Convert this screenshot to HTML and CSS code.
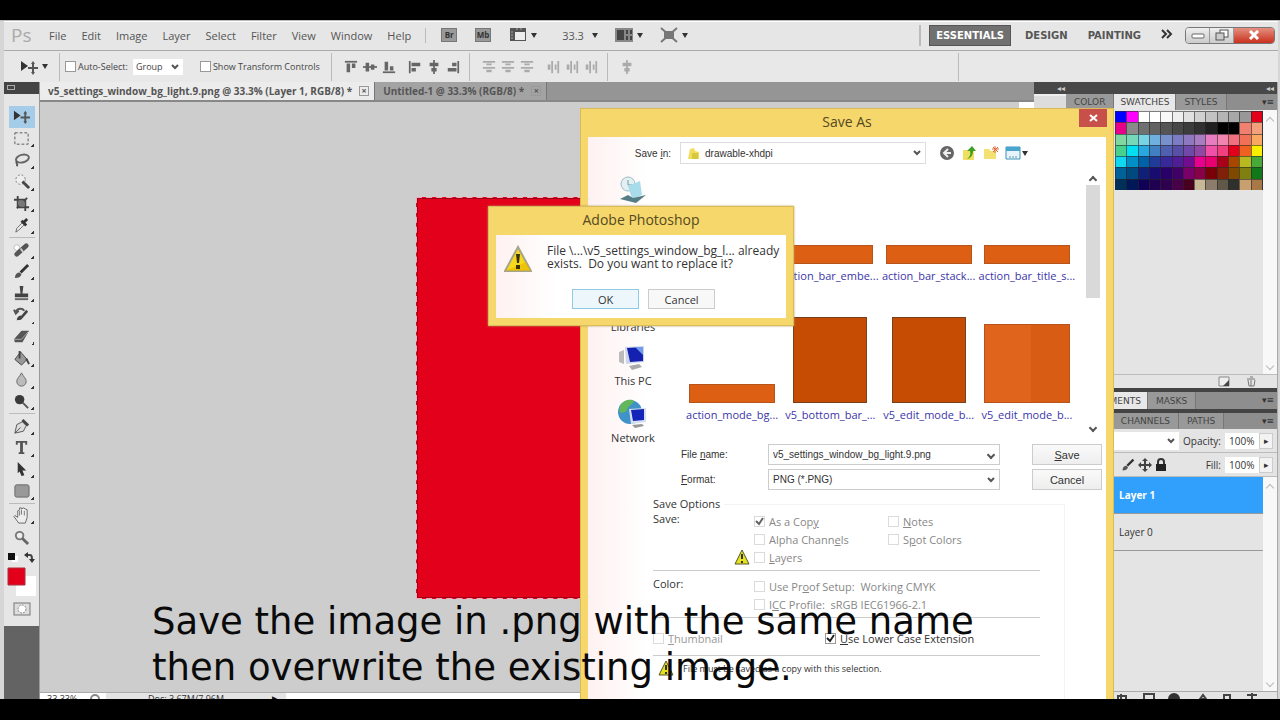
FILE: index.html
```html
<!DOCTYPE html>
<html lang="en">
<head>
    <meta charset="UTF-8">
    <meta name="viewport" content="width=device-width, initial-scale=1.0">
    <title>Save As</title>
    <link rel="stylesheet" href="styles.css">
</head>
<body>
    <svg class="symbols" aria-hidden="true">
        <symbol id="move" viewBox="0 0 18 18"><path d="M1 3l7 5-7 5z" fill="#333"/><path d="M13 5v10M8 10h10" stroke="#555" stroke-width="2"/><path d="M13 3l2 3h-4zM13 17l2-3h-4z" fill="#555"/></symbol>
        <symbol id="marquee" viewBox="0 0 18 18"><rect x="2" y="3" width="14" height="12" fill="none" stroke="#555" stroke-dasharray="3 2"/></symbol>
        <symbol id="lasso" viewBox="0 0 18 18"><ellipse cx="10" cy="7" rx="7" ry="4" fill="none" stroke="#666" stroke-width="2" transform="rotate(-15 10 7)"/><path d="M4 10c-2 2 2 2 0 5" fill="none" stroke="#555" stroke-width="2"/></symbol>
        <symbol id="quick" viewBox="0 0 18 18"><circle cx="8" cy="7" r="5" fill="#eee" stroke="#777" stroke-dasharray="2 2"/><path d="M10 9l7 7" stroke="#444" stroke-width="3"/></symbol>
        <symbol id="crop" viewBox="0 0 18 18"><path d="M5 1v12h12M1 5h12v12M4 14L15 3" fill="none" stroke="#444" stroke-width="2"/><path d="M6 6h6v6H6z" fill="#777"/></symbol>
        <symbol id="dropper" viewBox="0 0 18 18"><path d="M3 16l1-4 6-6 2 2-6 6z" fill="#eee" stroke="#666"/><path d="M9 4l5 5M11 6l4-4" stroke="#333" stroke-width="3"/></symbol>
        <symbol id="heal" viewBox="0 0 18 18"><circle cx="4" cy="7" r="3" fill="#fff" stroke="#bbb"/><path d="M4 14L14 5" stroke="#555" stroke-width="5" stroke-linecap="round"/><path d="M8 8l3 4" stroke="#ccc" stroke-width="2"/></symbol>
        <symbol id="brush" viewBox="0 0 18 18"><path d="M8 10l8-8" stroke="#333" stroke-width="3"/><path d="M2 16c0-4 2-6 5-6l2 2c-1 3-3 4-7 4z" fill="#555"/></symbol>
        <symbol id="stamp" viewBox="0 0 18 18"><path d="M7 1h4l-1 8h6v4H2V9h6z" fill="#444"/><path d="M2 15h14" stroke="#666" stroke-width="2"/></symbol>
        <symbol id="history" viewBox="0 0 18 18"><path d="M3 6c2-4 7-4 9-1M1 4l2 4 3-3" fill="none" stroke="#555" stroke-width="2"/><path d="M4 15c0-3 2-5 5-5l5-6 2 2-6 7c-1 2-3 2-6 2z" fill="#444"/></symbol>
        <symbol id="eraser" viewBox="0 0 18 18"><path d="M1 12l8-9h8l-7 12H2z" fill="#555"/><path d="M1 12h8l7-8" stroke="#aaa" fill="none"/></symbol>
        <symbol id="bucket" viewBox="0 0 18 18"><path d="M8 2l7 8-6 6-7-6z" fill="#999" stroke="#444"/><path d="M7 1v8M14 9l3 6" stroke="#444" stroke-width="2"/></symbol>
        <symbol id="drop" viewBox="0 0 18 18"><path d="M9 2c2 4 5 6 5 9a5 5 0 0 1-10 0c0-3 3-5 5-9z" fill="#bbb" stroke="#666"/></symbol>
        <symbol id="dodge" viewBox="0 0 18 18"><circle cx="7" cy="7" r="5" fill="#3a3a3a"/><path d="M10 10l6 6" stroke="#555" stroke-width="2"/></symbol>
        <symbol id="pen" viewBox="0 0 18 18"><path d="M2 16l2-9 6-3 4 4-3 6z" fill="#ddd" stroke="#555"/><path d="M10 2l6 6" stroke="#444" stroke-width="3"/><path d="M2 16l6-6" stroke="#555"/></symbol>
        <symbol id="type" viewBox="0 0 18 18"><path d="M9 3v12" stroke="#555" stroke-width="3"/><path d="M3 3h12M4 2v4M14 2v4M6 15h6" stroke="#555" stroke-width="2"/></symbol>
        <symbol id="select" viewBox="0 0 18 18"><path d="M5 1l9 9H10l2 5-3 1-2-5-2 2z" fill="#333"/></symbol>
        <symbol id="shape" viewBox="0 0 18 18"><rect x="2" y="3" width="15" height="13" rx="2" fill="#999" stroke="#666"/></symbol>
        <symbol id="hand" viewBox="0 0 18 18"><path d="M6 17l-5-7 1-1 3 2V4l2-1V1h2v1l2-1 2 1 2 1v8l-2 6z" fill="#eee" stroke="#666"/><path d="M7 4v5M9 3v5M12 4v5" stroke="#777"/></symbol>
        <symbol id="zoom" viewBox="0 0 18 18"><circle cx="7" cy="7" r="4" fill="#eee" stroke="#777" stroke-width="2"/><path d="M10 10l6 6" stroke="#666" stroke-width="3"/></symbol>
        <symbol id="warning" viewBox="0 0 28 28"><path d="M14 2L1 26h26z" fill="#f7d81c" stroke="#a5a58c" stroke-width="2"/><path d="M1 26h26l-5-9z" fill="#e8b800" opacity=".6"/><path d="M12 9h4l-1 9h-2zM12 20h4v4h-4z" fill="#3a3000"/></symbol>
        <symbol id="warningSmall" viewBox="0 0 16 16"><path d="M8 1l7 14H1z" fill="#e6e21c" stroke="#55552a"/><path d="M8 5v5M8 12v2" stroke="#333" stroke-width="2"/></symbol>
        <symbol id="alignTop" viewBox="0 0 16 16"><path d="M1 2h14" stroke="currentColor" stroke-width="2"/><path d="M3 4h4v10H3zM9 4h4v5H9z" fill="currentColor"/></symbol>
        <symbol id="alignMid" viewBox="0 0 16 16"><path d="M0 8h16" stroke="currentColor" stroke-width="2"/><path d="M3 3h4v10H3zM9 5h4v6H9z" fill="currentColor"/></symbol>
        <symbol id="alignBottom" viewBox="0 0 16 16"><path d="M1 14h14" stroke="currentColor" stroke-width="2"/><path d="M3 2h4v10H3zM9 7h4v5H9z" fill="currentColor"/></symbol>
        <symbol id="spread" viewBox="0 0 16 16"><path d="M1 2h14M1 9h14" stroke="currentColor" stroke-width="2"/><path d="M5 4h6v2H5zM5 11h6v3H5z" fill="currentColor"/></symbol>
    </svg>

    <div class="app">
        <header class="menubar">
            <span class="logo">Ps</span>
            <nav class="menus">
                <a href="#">File</a>
                <a href="#">Edit</a>
                <a href="#">Image</a>
                <a href="#">Layer</a>
                <a href="#">Select</a>
                <a href="#">Filter</a>
                <a href="#">View</a>
                <a href="#">Window</a>
                <a href="#">Help</a>
            </nav>
            <div class="app-tools">
                <button class="box-button" type="button">Br</button>
                <button class="box-button" type="button">Mb</button>
                <button class="drop-button" type="button" aria-label="View extras">
                    <svg width="18" height="16" viewBox="0 0 18 16"><path d="M1 1h16v13H1z" fill="#555"/><path d="M6 5h10v8H6z" fill="#eee"/><path d="M2 5h2M2 8h2M2 11h2M7 2h2M11 2h2" stroke="#aaa"/></svg>
                    <i class="caret"></i>
                </button>
                <button class="drop-button zoom-level" type="button">33.3 <i class="caret"></i></button>
                <button class="drop-button" type="button" aria-label="Arrange documents">
                    <svg width="18" height="16" viewBox="0 0 18 16"><path d="M0 1h18v14H0z" fill="#888"/><path d="M2 3h7v10H2zM11 3h2v4h-2zM15 3h2v4h-2zM11 9h2v4h-2zM15 9h2v4h-2z" fill="#444"/></svg>
                    <i class="caret"></i>
                </button>
                <button class="drop-button" type="button" aria-label="Screen mode">
                    <svg width="18" height="16" viewBox="0 0 18 16"><path d="M1 1l16 14M17 1L1 15" stroke="#777" stroke-width="2"/><path d="M4 4h10v8H4z" fill="#777"/></svg>
                    <i class="caret"></i>
                </button>
            </div>
            <div class="workspaces">
                <button class="active" type="button">ESSENTIALS</button>
                <button type="button">DESIGN</button>
                <button type="button">PAINTING</button>
                <button class="more" type="button" aria-label="More workspaces">
                    <svg width="12" height="10" viewBox="0 0 12 10"><path d="M1 1l4 4-4 4M6 1l4 4-4 4" fill="none" stroke="#333" stroke-width="2"/></svg>
                </button>
            </div>
            <div class="window-buttons">
                <button type="button" aria-label="Minimize"><svg width="14" height="10" viewBox="0 0 14 10"><rect x="1" y="4" width="12" height="4" rx="1" fill="#fff" stroke="#666"/></svg></button>
                <button type="button" aria-label="Restore"><svg width="14" height="12" viewBox="0 0 14 12"><rect x="5" y="1" width="8" height="7" fill="#fff" stroke="#555"/><rect x="1" y="4" width="8" height="7" fill="#ccc" stroke="#555"/></svg></button>
                <button class="close" type="button" aria-label="Close"><svg width="12" height="10" viewBox="0 0 12 10"><path d="M2 1l8 8M10 1L2 9" stroke="#fff" stroke-width="3"/></svg></button>
            </div>
        </header>

        <div class="options">
            <button class="current-tool" type="button" aria-label="Move tool"><svg width="18" height="18"><use href="#move"/></svg><i class="caret"></i></button>
            <div class="option-group auto-select">
                <label><input type="checkbox"><span>Auto-Select:</span></label>
                <select aria-label="Auto-select target"><option>Group</option></select>
                <label class="transform"><input type="checkbox"><span>Show Transform Controls</span></label>
            </div>
            <div class="option-group">
                <svg width="14" height="14"><use href="#alignTop"/></svg>
                <svg width="14" height="14"><use href="#alignMid"/></svg>
                <svg width="14" height="14"><use href="#alignBottom"/></svg>
                <svg class="turned first" width="14" height="14"><use href="#alignBottom"/></svg>
                <svg class="turned" width="14" height="14"><use href="#alignMid"/></svg>
                <svg class="turned-back" width="14" height="14"><use href="#alignBottom"/></svg>
            </div>
            <div class="option-group faded">
                <svg width="14" height="14"><use href="#spread"/></svg>
                <svg width="14" height="14"><use href="#spread"/></svg>
                <svg width="14" height="14"><use href="#spread"/></svg>
                <svg class="turned first" width="14" height="14"><use href="#spread"/></svg>
                <svg class="turned" width="14" height="14"><use href="#spread"/></svg>
                <svg class="turned" width="14" height="14"><use href="#spread"/></svg>
            </div>
            <div class="option-group faded last">
                <svg class="turned" width="14" height="14"><use href="#alignMid"/></svg>
            </div>
            <div class="option-end"></div>
        </div>

        <div class="body">
            <aside class="toolbox">
                <div class="dock-head"><i></i></div>
                <div class="tool-panel">
                    <div class="tools">
                        <button class="active" type="button" aria-label="Move"><svg><use href="#move"/></svg></button>
                        <button type="button" aria-label="Marquee"><svg><use href="#marquee"/></svg></button>
                        <button type="button" aria-label="Lasso"><svg><use href="#lasso"/></svg></button>
                        <button type="button" aria-label="Quick selection"><svg><use href="#quick"/></svg></button>
                        <button type="button" aria-label="Crop"><svg><use href="#crop"/></svg></button>
                        <button type="button" aria-label="Eyedropper"><svg><use href="#dropper"/></svg></button>
                        <hr>
                        <button type="button" aria-label="Healing brush"><svg><use href="#heal"/></svg></button>
                        <button type="button" aria-label="Brush"><svg><use href="#brush"/></svg></button>
                        <button type="button" aria-label="Clone stamp"><svg><use href="#stamp"/></svg></button>
                        <button type="button" aria-label="History brush"><svg><use href="#history"/></svg></button>
                        <button type="button" aria-label="Eraser"><svg><use href="#eraser"/></svg></button>
                        <button type="button" aria-label="Paint bucket"><svg><use href="#bucket"/></svg></button>
                        <button type="button" aria-label="Blur"><svg><use href="#drop"/></svg></button>
                        <button type="button" aria-label="Dodge"><svg><use href="#dodge"/></svg></button>
                        <hr>
                        <button type="button" aria-label="Pen"><svg><use href="#pen"/></svg></button>
                        <button type="button" aria-label="Type"><svg><use href="#type"/></svg></button>
                        <button type="button" aria-label="Path selection"><svg><use href="#select"/></svg></button>
                        <button type="button" aria-label="Rectangle"><svg><use href="#shape"/></svg></button>
                        <hr>
                        <button type="button" aria-label="Hand"><svg><use href="#hand"/></svg></button>
                        <button class="single" type="button" aria-label="Zoom"><svg><use href="#zoom"/></svg></button>
                    </div>
                    <svg class="colors" width="30" height="46" viewBox="0 0 30 46">
                        <path d="M5 4h6v6H5z" fill="#fff"/><path d="M1 1h7v7H1z" fill="#111"/>
                        <path d="M18 3h5c2 0 2 2 2 6" fill="none" stroke="#444" stroke-width="2"/><path d="M21 0v6l-4-3zM22 7h6l-3 4z" fill="#333"/>
                        <path d="M9 24h20v20H9z" fill="#fff"/><path d="M1 16h17v17H1z" fill="#e2001a" stroke="#a8323f"/>
                    </svg>
                    <button class="mask-button" type="button" aria-label="Quick mask"><svg width="18" height="14" viewBox="0 0 18 14"><rect x="1" y="1" width="16" height="12" fill="#ddd" stroke="#777"/><circle cx="9" cy="7" r="4" fill="#fff" stroke="#888" stroke-dasharray="2 1"/></svg></button>
                </div>
            </aside>

            <main class="document">
                <div class="tabs">
                    <button class="active" type="button"><span>v5_settings_window_bg_light.9.png @ 33.3% (Layer 1, RGB/8) *</span><i>×</i></button>
                    <button type="button"><span>Untitled-1 @ 33.3% (RGB/8) *</span><i>×</i></button>
                </div>
                <div class="canvas">
                    <div class="artwork"></div>
                    <div class="canvas-scroll"></div>
                </div>
                <footer class="status">
                    <span>33.33%</span>
                    <span class="status-icon"></span>
                    <span class="doc-size">Doc: 3.67M/7.96M</span>
                    <span class="status-arrow">▶</span>
                </footer>
            </main>

            <aside class="dock">
                <div class="dock-top"><span>◂◂</span><span>◂◂</span></div>
                <div class="dock-columns">
                    <div class="icon-column"></div>
                    <div class="panels">
                        <section class="panel">
                            <div class="panel-tabs">
                                <button type="button">COLOR</button>
                                <button class="active" type="button">SWATCHES</button>
                                <button type="button">STYLES</button>
                                <span class="panel-menu">▾≡</span>
                            </div>
                            <div class="swatch-area">
                                <div class="swatches" id="swatches"></div>
                                <div class="scroll-track"><i class="chevron up"></i><i class="chevron"></i></div>
                            </div>
                            <div class="panel-foot">
                                <svg width="12" height="11" viewBox="0 0 12 11"><path d="M1 1h10v9H1z" fill="#eee" stroke="#888"/><path d="M5 10l6-6v6z" fill="#444"/></svg>
                                <svg width="12" height="11" viewBox="0 0 12 11"><path d="M2 3h8M5 1h3M3 4l1 6h5l1-6M6 4v6" fill="none" stroke="#777"/></svg>
                            </div>
                        </section>
                        <section class="panel">
                            <div class="panel-tabs adjustments">
                                <button class="active" type="button">ADJUSTMENTS</button>
                                <button type="button">MASKS</button>
                                <span class="panel-menu">▾≡</span>
                            </div>
                        </section>
                        <section class="panel layers">
                            <div class="panel-tabs">
                                <button class="active" type="button">LAYERS</button>
                                <button type="button">CHANNELS</button>
                                <button type="button">PATHS</button>
                                <span class="panel-menu">▾≡</span>
                            </div>
                            <div class="layer-row">
                                <select class="blend" aria-label="Blend mode"><option></option></select>
                                <label for="opacity">Opacity:</label>
                                <input id="opacity" type="text" value="100%"><button type="button" aria-label="Opacity slider">▸</button>
                            </div>
                            <div class="layer-row">
                                <span class="locks">
                                    <svg width="14" height="14"><use href="#brush"/></svg>
                                    <svg width="14" height="14" viewBox="0 0 14 14"><path d="M7 1v12M1 7h12" stroke="#444" stroke-width="2"/><path d="M7 0l3 3H4zM7 14l3-3H4zM0 7l3-3v6zM14 7l-3-3v6z" fill="#444"/></svg>
                                    <svg width="12" height="14" viewBox="0 0 12 14"><path d="M3 7V4a3 3 0 0 1 6 0v3" fill="none" stroke="#333" stroke-width="2"/><path d="M1 6h10v7H1z" fill="#222"/></svg>
                                </span>
                                <label for="fill">Fill:</label>
                                <input id="fill" type="text" value="100%"><button type="button" aria-label="Fill slider">▸</button>
                            </div>
                            <div class="layer-area">
                                <ul class="layer-list">
                                    <li class="selected">Layer 1</li>
                                    <li>Layer 0</li>
                                </ul>
                                <div class="scroll-track"><i class="chevron up"></i><i class="chevron"></i></div>
                            </div>
                            <div class="layer-foot">
                                <svg width="150" height="7" viewBox="0 0 150 7"><path d="M4 7V4h8v3M7 2v5M30 7V2h10v5" fill="none" stroke="#444" stroke-width="2"/><circle cx="60" cy="7" r="6" fill="#333"/><path d="M86 7h6l-3-4zM110 7V3h6v4M133 3h10M138 1v6" fill="none" stroke="#444" stroke-width="2"/></svg>
                            </div>
                        </section>
                    </div>
                </div>
            </aside>
        </div>

        <div class="window save-window" role="dialog" aria-labelledby="saveTitle">
            <div class="window-title">
                <h2 id="saveTitle">Save As</h2>
                <button class="window-close" type="button" aria-label="Close"><svg width="9" height="8" viewBox="0 0 9 8"><path d="M1 1l7 6M8 1L1 7" stroke="#fff" stroke-width="2"/></svg></button>
            </div>
            <form class="save-form">
                <div class="save-in">
                    <label for="folder">Save <u>i</u>n:</label>
                    <div class="folder-box">
                        <svg width="14" height="14" viewBox="0 0 14 14"><path d="M1 13l2-10 4-1 1 3 4 1v7z" fill="#f2dc5a"/><path d="M5 7h6v6H5z" fill="#d5c83c"/></svg>
                        <select id="folder"><option>drawable-xhdpi</option></select>
                    </div>
                    <div class="folder-tools">
                        <button type="button" aria-label="Back"><svg width="16" height="16" viewBox="0 0 16 16"><circle cx="8" cy="8" r="7" fill="#666"/><path d="M9 4L5 8l4 4M5 8h7" fill="none" stroke="#eee" stroke-width="2"/></svg></button>
                        <button type="button" aria-label="Up one level"><svg width="16" height="16" viewBox="0 0 16 16"><path d="M2 5h11v10H2z" fill="#f0e060"/><path d="M6 14c3-2 4-5 3-8H6l5-5 4 5h-3c0 4-2 7-6 8z" fill="#3f9e28"/></svg></button>
                        <button type="button" aria-label="New folder"><svg width="16" height="16" viewBox="0 0 16 16"><path d="M1 4h5l2 2h5v8H1z" fill="#f3e273"/><path d="M12 1v7M9 4h7M10 2l5 5M15 2l-5 5" stroke="#e06a35"/></svg></button>
                        <button class="view-button" type="button" aria-label="View menu"><svg width="16" height="16" viewBox="0 0 16 16"><path d="M1 2h14v12H1z" fill="#e7f4fb" stroke="#3b93be"/><path d="M1 2h14v4H1z" fill="#4aa5cc"/><path d="M4 12h8" stroke="#69a" stroke-dasharray="2 1"/></svg><i class="caret"></i></button>
                    </div>
                </div>

                <div class="browser">
                    <div class="places">
                        <a class="recent" href="#" aria-label="Recent places"><svg width="30" height="30" viewBox="0 0 30 30"><circle cx="10" cy="9" r="7" fill="#e3f0f3" stroke="#9bbcc4"/><path d="M10 5v5h4" fill="none" stroke="#6d9aa5"/><path d="M10 11l12-5 2 14-10 4z" fill="#a8dcec"/><path d="M2 24l8-4 5 3 13-3-10 8z" fill="#567d86"/></svg></a>
                        <a class="libraries" href="#">Libraries</a>
                        <a href="#"><svg width="32" height="28" viewBox="0 0 32 28"><path d="M2 8l5-2v14l-5-2z" fill="#bbb"/><path d="M8 3l19-1v16l-18 2z" fill="#ccd6e8"/><path d="M10 4l16-1v14l-13 1z" fill="#1420b0"/><path d="M18 3h8v8z" fill="#6f9bea"/><path d="M12 22l10-2 3 3-10 3z" fill="#aaa"/></svg>This PC</a>
                        <a href="#"><svg width="32" height="30" viewBox="0 0 32 30"><circle cx="13" cy="13" r="12" fill="#3f93c8"/><path d="M3 7c4-7 12-7 14-5-3 5-6 5-7 9-2 3-6 4-8 1z" fill="#63b65a"/><path d="M12 10l17-1v14l-15 2z" fill="#d5dff0"/><path d="M14 11l13-1v11l-11 1z" fill="#1524b8"/><path d="M15 26l10-1 2 2-9 2z" fill="#999"/></svg>Network</a>
                    </div>
                    <div class="files">
                        <figure></figure>
                        <figure><div class="thumb bar"></div><figcaption>action_bar_embe...</figcaption></figure>
                        <figure><div class="thumb bar"></div><figcaption>action_bar_stack...</figcaption></figure>
                        <figure><div class="thumb bar"></div><figcaption>action_bar_title_s...</figcaption></figure>
                        <figure><div class="thumb bar"></div><figcaption>action_mode_bg...</figcaption></figure>
                        <figure><div class="thumb tall"></div><figcaption>v5_bottom_bar_...</figcaption></figure>
                        <figure><div class="thumb tall"></div><figcaption>v5_edit_mode_b...</figcaption></figure>
                        <figure><div class="thumb wide"></div><figcaption>v5_edit_mode_b...</figcaption></figure>
                    </div>
                    <div class="file-scroll"><i class="chevron up"></i><span></span><i class="chevron"></i></div>
                </div>

                <div class="name-grid">
                    <label for="fileName">File <u>n</u>ame:</label>
                    <div class="combo"><input id="fileName" type="text" value="v5_settings_window_bg_light.9.png"><i class="chevron"></i></div>
                    <button type="button"><u>S</u>ave</button>
                    <label for="format"><u>F</u>ormat:</label>
                    <select id="format"><option>PNG (*.PNG)</option></select>
                    <button type="button">Cancel</button>
                </div>

                <fieldset class="save-options">
                    <legend>Save Options</legend>
                    <div class="option-block">
                        <span class="block-name">Save:</span>
                        <div class="checks two">
                            <label><input type="checkbox" checked disabled><span>As a Cop<u>y</u></span></label>
                            <label><input type="checkbox" disabled><span><u>N</u>otes</span></label>
                            <label><input type="checkbox" disabled><span>Alpha Chann<u>e</u>ls</span></label>
                            <label><input type="checkbox" disabled><span>S<u>p</u>ot Colors</span></label>
                            <label class="warned"><svg width="16" height="16"><use href="#warningSmall"/></svg><input type="checkbox" disabled><span><u>L</u>ayers</span></label>
                        </div>
                    </div>
                    <div class="option-block">
                        <span class="block-name">Color:</span>
                        <div class="checks">
                            <label><input type="checkbox" disabled><span>Use Pr<u>o</u>of Setup:&nbsp; Working CMYK</span></label>
                            <label><input type="checkbox" disabled><span>I<u>C</u>C Profile:&nbsp; sRGB IEC61966-2.1</span></label>
                        </div>
                    </div>
                    <div class="option-block bottom-block">
                        <label class="thumbnail"><input type="checkbox" disabled><span><u>T</u>humbnail</span></label>
                        <label class="enabled"><input type="checkbox" checked><span><u>U</u>se Lower Case Extension</span></label>
                    </div>
                    <p class="note"><svg width="16" height="16"><use href="#warningSmall"/></svg><span>File must be saved as a copy with this selection.</span></p>
                </fieldset>
            </form>
        </div>

        <div class="window alert-window" role="alertdialog" aria-labelledby="alertTitle">
            <div class="window-title"><h2 id="alertTitle">Adobe Photoshop</h2></div>
            <div class="alert-body">
                <svg width="28" height="28"><use href="#warning"/></svg>
                <p>File \...\v5_settings_window_bg_l... already<br>exists.&nbsp; Do you want to replace it?</p>
                <div class="alert-buttons">
                    <button class="default" type="button">OK</button>
                    <button type="button">Cancel</button>
                </div>
            </div>
        </div>

        <p class="caption">Save the image in .png with the same name<br>then overwrite the existing image.</p>
    </div>

    <script>
        const colors = [
            "#0000ff #ff00ff #ffffff #ffffff #f8f8f8 #eeeeee #e0e0e0 #d0d0d0 #c2c2c2 #b4b4b4 #a8a8a8 #989898 #e2001a",
            "#e6008a #8a8a8a #707070 #626262 #555555 #484848 #3c3c3c #303030 #202020 #000000 #000000 #f08070 #f4a07c",
            "#7ed8a0 #76d8b8 #78d4e4 #70b0e0 #7890cc #7c7cc4 #8e78c0 #a87cc0 #e87cc0 #f284b0 #f07080 #f07058 #f8a860",
            "#48d08c #00e0f0 #28a8e0 #4080c0 #5060b0 #5850a8 #7048a8 #9048a4 #f050a8 #f04080 #e2001a #f06020 #f8f000",
            "#10d8f0 #0090c8 #0060a8 #203c98 #38289c #501c98 #700c90 #e80090 #e80070 #a80018 #a84800 #b8b820 #48a838",
            "#006098 #004880 #102078 #180c70 #280068 #400068 #780068 #880048 #780008 #802008 #804800 #808010 #107818",
            "#003058 #001858 #100058 #200050 #300050 #480048 #480020 #c8b898 #8c7c6c #605848 #30302c #c8a070 #a87848"
        ];

        const swatches = document.getElementById("swatches");
        colors.join(" ").split(" ").forEach(color => {
            const cell = document.createElement("span");
            cell.style.background = color;
            swatches.appendChild(cell);
        });
    </script>
</body>
</html>
```
FILE: styles.css
```css
* {
    box-sizing: border-box;
}
body {
    margin: 0;
    background: #000;
    font-family: "Open Sans", "Noto Sans", sans-serif;
    font-size: 11px;
    color: #333;
}
button, input, select {
    font: inherit;
    color: inherit;
    margin: 0;
    padding: 0;
    border: none;
    background: none;
    border-radius: 0;
}
h2, p, ul, figure {
    margin: 0;
    padding: 0;
}
a {
    color: inherit;
    text-decoration: none;
}
.symbols {
    position: absolute;
    width: 0;
    height: 0;
}
.app {
    position: relative;
    display: flex;
    flex-direction: column;
    height: calc(100vh - 41px);
    margin: 20px 0 21px;
    padding: 0 2px 0 4px;
    background: #d6d6d6;
    border-top: 1px solid #bbb;
    overflow: hidden;
}
.caret {
    display: inline-block;
    border: 3px solid transparent;
    border-top: 5px solid #333;
    border-bottom: 0;
}
.chevron {
    width: 6px;
    height: 6px;
    border: solid #555;
    border-width: 0 2px 2px 0;
    transform: rotate(45deg);
}
.chevron.up {
    transform: rotate(225deg);
}
select {
    appearance: none;
    background: #fff url("data:image/svg+xml,%3Csvg xmlns='http://www.w3.org/2000/svg' width='8' height='6'%3E%3Cpath d='M1 1l3 3 3-3' fill='none' stroke='%23555' stroke-width='2'/%3E%3C/svg%3E") no-repeat right 4px center;
}
input[type="checkbox"] {
    appearance: none;
    flex: none;
    width: 11px;
    height: 11px;
    background: #fff;
    border: 1px solid #999;
}
input[type="checkbox"]:checked {
    background: url("data:image/svg+xml,%3Csvg xmlns='http://www.w3.org/2000/svg' width='9' height='9'%3E%3Cpath d='M1 4l3 3 4-6' fill='none' stroke='%23222' stroke-width='2'/%3E%3C/svg%3E") no-repeat center;
}
input[type="checkbox"]:disabled {
    border-color: #ccc;
    opacity: 0.7;
}

/* menu bar */
.menubar {
    display: flex;
    align-items: center;
    height: 30px;
    padding-bottom: 2px;
    background: #e6e6e6;
    border-top: 1px solid #fff;
    border-bottom: 1px solid #aaa;
    color: #555;
}
.logo {
    width: 45px;
    padding-left: 7px;
    font-size: 19px;
    color: #aaa;
}
.menus {
    display: flex;
    gap: 15px;
    padding-right: 14px;
    border-right: 1px solid #bbb;
}
.app-tools {
    display: flex;
    align-items: center;
    margin-left: 15px;
}
.box-button {
    width: 16px;
    height: 14px;
    margin-right: 18px;
    background: #999;
    border: 1px solid #777;
    color: #333;
    font-size: 8px;
    font-weight: bold;
    line-height: 10px;
}
.drop-button {
    display: flex;
    align-items: center;
    gap: 4px;
    margin-right: 17px;
}
.zoom-level {
    gap: 8px;
    margin: 0 17px 0 8px;
}
.workspaces {
    display: flex;
    align-items: center;
    gap: 14px;
    margin-left: auto;
    padding-left: 8px;
    border-left: 2px solid #bbb;
    font-family: "DejaVu Sans", sans-serif;
    font-size: 10px;
    font-weight: bold;
}
.workspaces button {
    height: 21px;
}
.workspaces button + button + button {
    margin-left: 6px;
}
.workspaces .active {
    padding: 0 6px;
    background: #707070;
    border: 1px solid #555;
    color: #fff;
}
.window-buttons {
    display: flex;
    height: 17px;
    margin: 0 3px 0 12px;
    border: 1px solid #777;
    border-radius: 4px;
    overflow: hidden;
}
.window-buttons button {
    display: flex;
    align-items: center;
    justify-content: center;
    width: 24px;
    background: linear-gradient(#eee, #ccc);
    border-right: 1px solid #999;
}
.window-buttons .close {
    width: 40px;
    background: linear-gradient(#e59080, #c9301c);
    border: none;
}

/* tool options */
.options {
    display: flex;
    align-items: center;
    height: 31px;
    background: #e8e8e8;
    color: #444;
}
.current-tool {
    display: flex;
    align-items: center;
    gap: 4px;
    width: 56px;
    height: 28px;
    padding-left: 16px;
    border-right: 1px solid #bbb;
}
.option-group {
    display: flex;
    align-items: center;
    gap: 5px;
    height: 28px;
    padding: 0 9px 0 12px;
    border-right: 1px solid #bbb;
}
.option-group label {
    display: flex;
    align-items: center;
    gap: 2px;
    font-size: 9px;
}
.option-group select {
    width: 50px;
    height: 16px;
    padding-left: 3px;
    font-size: 9px;
    line-height: 14px;
}
.option-group .transform {
    margin-left: 12px;
}
.auto-select {
    padding: 0 11px 0 5px;
}
.option-group svg {
    color: #666;
}
.option-group.faded svg {
    color: #aaa;
}
.option-group.last {
    border: none;
}
.turned {
    transform: rotate(90deg);
}
.turned-back {
    transform: rotate(-90deg);
}
.first {
    margin-left: 7px;
}
.option-end {
    width: 320px;
    height: 28px;
    margin-left: auto;
    border-left: 1px solid #bbb;
}

/* work area */
.body {
    display: flex;
    flex: 1;
    min-height: 0;
}
.toolbox {
    display: flex;
    flex-direction: column;
    width: 36px;
    background: #636363;
    border-right: 1px solid #999;
}
.dock-head {
    height: 12px;
    padding: 3px;
    background: #444;
}
.dock-head i {
    display: block;
    width: 8px;
    height: 5px;
    border: 1px solid #aaa;
}
.tool-panel {
    display: flex;
    flex-direction: column;
    align-items: center;
    padding: 12px 2px 10px;
    background: #e6e6e6;
}
.tools {
    display: flex;
    flex-direction: column;
    width: 26px;
    height: 442px;
}
.tools button {
    flex: 1;
    display: flex;
    align-items: center;
    justify-content: center;
    min-height: 0;
    background: linear-gradient(135deg, transparent 50%, #333 50%) no-repeat right 1px bottom 2px / 3px 3px;
}
.tools .single {
    background: none;
}
.tools svg {
    width: 17px;
    height: 17px;
}
.tools .active {
    background: #a5cdea;
}
.tools hr {
    width: 100%;
    margin: 1px 0;
    border: none;
    border-top: 1px solid #bbb;
}
.colors {
    margin-top: 4px;
}
.mask-button {
    height: 14px;
    margin-top: 4px;
}
.mask-button svg {
    display: block;
}
.document {
    display: flex;
    flex: 1;
    flex-direction: column;
    min-width: 0;
}
.tabs {
    display: flex;
    height: 20px;
    background: #959595;
    border-bottom: 2px solid #888;
    font-size: 10px;
    font-weight: bold;
}
.tabs button {
    display: flex;
    align-items: center;
    gap: 7px;
    padding: 0 5px 0 8px;
    background: #a3a3a3;
    border-right: 1px solid #777;
    color: #555;
    white-space: nowrap;
}
.tabs .active {
    background: #ececec;
    color: #555;
}
.tabs i {
    width: 10px;
    height: 10px;
    border: 1px solid #999;
    font-size: 9px;
    font-style: normal;
    line-height: 7px;
}
.canvas {
    display: flex;
    flex: 1;
    justify-content: space-between;
    min-height: 0;
    background: #cdcdcd;
}
.artwork {
    width: 420px;
    height: 402px;
    margin: 95px 0 0 376px;
    background: #e2001a;
    border: 2px dashed #f7a8b8;
    outline: 1px solid #a00018;
    outline-offset: -2px;
}
.canvas-scroll {
    width: 15px;
    background: #fff;
}
.status {
    display: flex;
    height: 7px;
    background: #fff;
    border-top: 1px solid #aaa;
    font-size: 9px;
    line-height: 12px;
    overflow: hidden;
}
.status span:first-child {
    width: 44px;
    padding-left: 7px;
}
.status-icon {
    width: 10px;
    height: 10px;
    margin: 1px 6px;
    border: 2px solid #888;
    border-radius: 50%;
}
.doc-size {
    width: 166px;
    padding-left: 42px;
    background: #e4e4e4;
}
.status-arrow {
    width: 14px;
    background: #e4e4e4;
    color: #111;
}

/* right dock */
.dock {
    display: flex;
    flex-direction: column;
    width: 244px;
    border-right: 1px solid #aaa;
}
.dock-top {
    display: flex;
    justify-content: space-between;
    height: 12px;
    padding: 0 3px 0 23px;
    background: #484848;
    color: #ccc;
    font-size: 8px;
    line-height: 12px;
}
.dock-columns {
    display: flex;
    flex: 1;
    min-height: 0;
}
.icon-column {
    width: 32px;
    background: #ddd;
    border-top: 2px solid #eee;
}
.panels {
    display: flex;
    flex: 1;
    flex-direction: column;
    min-width: 0;
}
.panel {
    background: #e4e4e4;
}
.panel-tabs {
    display: flex;
    height: 16px;
    background: #8e8e8e;
    font-family: "DejaVu Sans", sans-serif;
    font-size: 9px;
    line-height: 16px;
}
.panel-tabs button {
    padding: 0 8px;
    background: #999;
    border-right: 1px solid #777;
    color: #444;
}
.panel-tabs .active {
    padding: 0 6px;
    background: #e8e8e8;
}
.panel-menu {
    margin-left: auto;
    padding-right: 3px;
}
.swatch-area {
    display: flex;
    align-items: flex-start;
    justify-content: flex-end;
    height: 264px;
}
.swatches {
    display: grid;
    grid-template-columns: repeat(13, 1fr);
    grid-template-rows: repeat(7, 1fr);
    width: 148px;
    height: 79px;
    margin-top: 1px;
    border-right: 1px solid #333;
}
.swatches span {
    border: solid rgba(40, 40, 40, 0.6);
    border-width: 1px 0 0 1px;
}
.scroll-track {
    display: flex;
    flex: none;
    flex-direction: column;
    align-items: center;
    align-self: stretch;
    justify-content: space-between;
    width: 14px;
    padding: 8px 0 5px;
    background: #f8f8f8;
}
.scroll-track .chevron {
    border-color: #bbb;
    border-width: 0 1px 1px 0;
}
.panel-foot {
    display: flex;
    justify-content: flex-end;
    gap: 15px;
    height: 14px;
    padding: 1px 20px 0 0;
    border-top: 1px solid #bbb;
}
.panel + .panel {
    border-top: 4px solid #444;
}
.adjustments {
    height: 17px;
}
.adjustments .active {
    padding: 0 6px 0 10px;
}
.layers {
    display: flex;
    flex: 1;
    flex-direction: column;
    min-height: 0;
}
.layer-row {
    display: flex;
    align-items: center;
    justify-content: flex-end;
    height: 24px;
    padding-right: 4px;
    border-bottom: 1px solid #bbb;
    font-size: 10px;
}
.layer-row label {
    margin: 0 4px;
}
.layer-row input {
    width: 34px;
    height: 16px;
    padding: 0 4px;
    background: #fff;
}
.layer-row button {
    width: 14px;
    height: 16px;
    background: #f3f3f3;
    border: 1px solid #ccc;
    font-size: 9px;
    line-height: 12px;
}
.blend {
    flex: 1;
    height: 18px;
}
.locks {
    display: flex;
    gap: 3px;
    margin-right: auto;
    padding-left: 55px;
}
.layer-area {
    display: flex;
    flex: 1;
    min-height: 0;
}
.layer-list {
    flex: 1;
    list-style: none;
    font-size: 10px;
}
.layer-list li {
    height: 37px;
    padding-left: 53px;
    border-bottom: 1px solid #999;
    line-height: 37px;
}
.layer-list .selected {
    background: #319ffc;
    color: #fff;
    font-weight: bold;
}
.layer-foot {
    height: 8px;
    padding-left: 48px;
    border-top: 1px solid #aaa;
}
.layer-foot svg {
    display: block;
}

/* windows over the work area */
.window {
    position: absolute;
    padding: 0 7px 7px;
    background: #f5d76c;
    border: 1px solid #d9bc59;
}
.window-title {
    display: flex;
    align-items: center;
    justify-content: center;
    height: 28px;
    padding-bottom: 3px;
}
.window-title h2 {
    font-size: 14px;
    font-weight: normal;
    color: #55491f;
}
.save-window {
    top: 87px;
    left: 580px;
    width: 534px;
    bottom: -8px;
}
.window-close {
    position: absolute;
    top: 0;
    right: 6px;
    width: 28px;
    height: 18px;
    background: #c8504a;
    line-height: 8px;
}
.save-form {
    height: 100%;
    background: linear-gradient(90deg, #fff1f1, #fff 60px);
    color: #333;
}
.save-in, .name-grid {
    font-family: "Liberation Sans", Arial, sans-serif;
    font-size: 10px;
}
.save-in {
    display: flex;
    align-items: center;
    height: 34px;
    padding-bottom: 2px;
}
.save-in > label {
    width: 83px;
    text-align: right;
}
.folder-box {
    display: flex;
    align-items: center;
    gap: 4px;
    width: 246px;
    height: 22px;
    margin-left: 9px;
    padding-left: 6px;
    background: #fff;
    border: 1px solid #ddd;
}
.folder-box select {
    flex: 1;
    height: 18px;
}
.folder-tools {
    display: flex;
    gap: 6px;
    margin-left: 13px;
}
.folder-tools button {
    display: flex;
    align-items: center;
}
.view-button {
    gap: 1px;
}
.browser {
    display: flex;
    height: 268px;
}
.places {
    display: flex;
    flex-direction: column;
    align-items: center;
    width: 90px;
    line-height: 14px;
}
.places a {
    display: flex;
    flex: none;
    flex-direction: column;
    align-items: center;
    margin-bottom: 11px;
}
.places svg {
    margin-bottom: 2px;
}
.places .recent {
    height: 145px;
    margin: 4px 0 0;
}
.places .libraries {
    margin-bottom: 10px;
}
.files {
    display: grid;
    flex: 1;
    grid-template-columns: repeat(4, 1fr);
    grid-template-rows: 113px 139px;
    margin: 0 10px 0 5px;
    color: #3b35a8;
    white-space: nowrap;
}
.files figure {
    display: flex;
    flex-direction: column;
    align-items: center;
    justify-content: flex-end;
    min-width: 0;
}
.files figcaption {
    margin-top: 4px;
    line-height: 16px;
}
.thumb {
    width: 86px;
    background: #dc5f14;
    border: 1px solid #b5541c;
}
.thumb.bar {
    height: 19px;
}
.thumb.tall {
    width: 74px;
    height: 86px;
    background: #c64c04;
    border-color: #74401f;
}
.thumb.wide {
    height: 79px;
    background: linear-gradient(90deg, #e0641c 55%, #d85c14 55%);
}
.file-scroll {
    display: flex;
    flex-direction: column;
    align-items: center;
    width: 14px;
    height: 260px;
    margin-right: 6px;
    padding-top: 6px;
}
.file-scroll span {
    width: 14px;
    height: 113px;
    margin: 2px 0 auto;
    background: #d9d9d9;
}
.name-grid {
    display: grid;
    grid-template-columns: 78px 232px 70px;
    grid-auto-rows: 21px;
    align-items: center;
    gap: 4px 9px;
    margin: 5px 0 0 93px;
}
.name-grid button {
    width: 70px;
    height: 21px;
    margin-left: 23px;
    background: linear-gradient(#fafafa, #eee);
    border: 1px solid #ccc;
    font-size: 11px;
}
.name-grid select, .combo {
    height: 21px;
    padding-left: 4px;
    border: 1px solid #ccc;
}
.combo {
    display: flex;
    align-items: center;
    padding-right: 5px;
    background: #fff;
}
.combo input {
    flex: 1;
    min-width: 0;
}
.save-options {
    width: 412px;
    height: 230px;
    margin: 7px 0 0 65px;
    padding: 0;
    border: 1px solid #f3f3f3;
    border-left: none;
}
.save-options legend {
    padding: 0 4px 0 0;
    line-height: 14px;
}
.option-block {
    display: flex;
    width: 387px;
    padding-bottom: 4px;
    border-bottom: 1px solid #ccc;
}
.block-name {
    width: 101px;
    padding-top: 1px;
    line-height: 14px;
}
.checks {
    display: grid;
    padding-top: 1px;
    color: #888;
}
.checks.two {
    grid-template-columns: 134px 134px;
}
.checks label, .bottom-block label {
    display: flex;
    align-items: center;
    gap: 4px;
    height: 18px;
    white-space: pre;
}
.checks .warned {
    margin-left: -20px;
}
.option-block + .option-block {
    padding-top: 5px;
}
.bottom-block {
    color: #999;
}
.bottom-block .thumbnail {
    width: 172px;
}
.bottom-block .enabled {
    color: #333;
}
.save-options .bottom-block {
    padding: 11px 0 8px;
}
.note {
    display: flex;
    align-items: center;
    gap: 9px;
    padding: 4px 0 0 5px;
    font-size: 9px;
}
.alert-window {
    top: 185px;
    left: 488px;
    width: 306px;
    box-shadow: 0 0 2px #b8a05a;
}
.alert-body {
    display: grid;
    grid-template-columns: 28px 1fr;
    gap: 16px 15px;
    padding: 9px 8px;
    background: linear-gradient(90deg, #fff1f1, #fff 60px);
    line-height: 13px;
}
.alert-body svg {
    margin-top: 1px;
}
.alert-body p {
    font-size: 12px;
    white-space: nowrap;
}
.alert-buttons {
    display: flex;
    grid-column: 1 / 3;
    justify-content: center;
    gap: 9px;
    padding-left: 4px;
}
.alert-buttons button {
    width: 67px;
    height: 20px;
    background: #f8f8f8;
    border: 1px solid #ccc;
}
.alert-buttons .default {
    background: #edf7fb;
    border-color: #8fcbe3;
}
.caption {
    position: absolute;
    top: 578px;
    left: 152px;
    font-family: "DejaVu Sans", sans-serif;
    font-size: 37px;
    line-height: 46px;
    color: #0a0a0a;
    white-space: nowrap;
    pointer-events: none;
}
```
